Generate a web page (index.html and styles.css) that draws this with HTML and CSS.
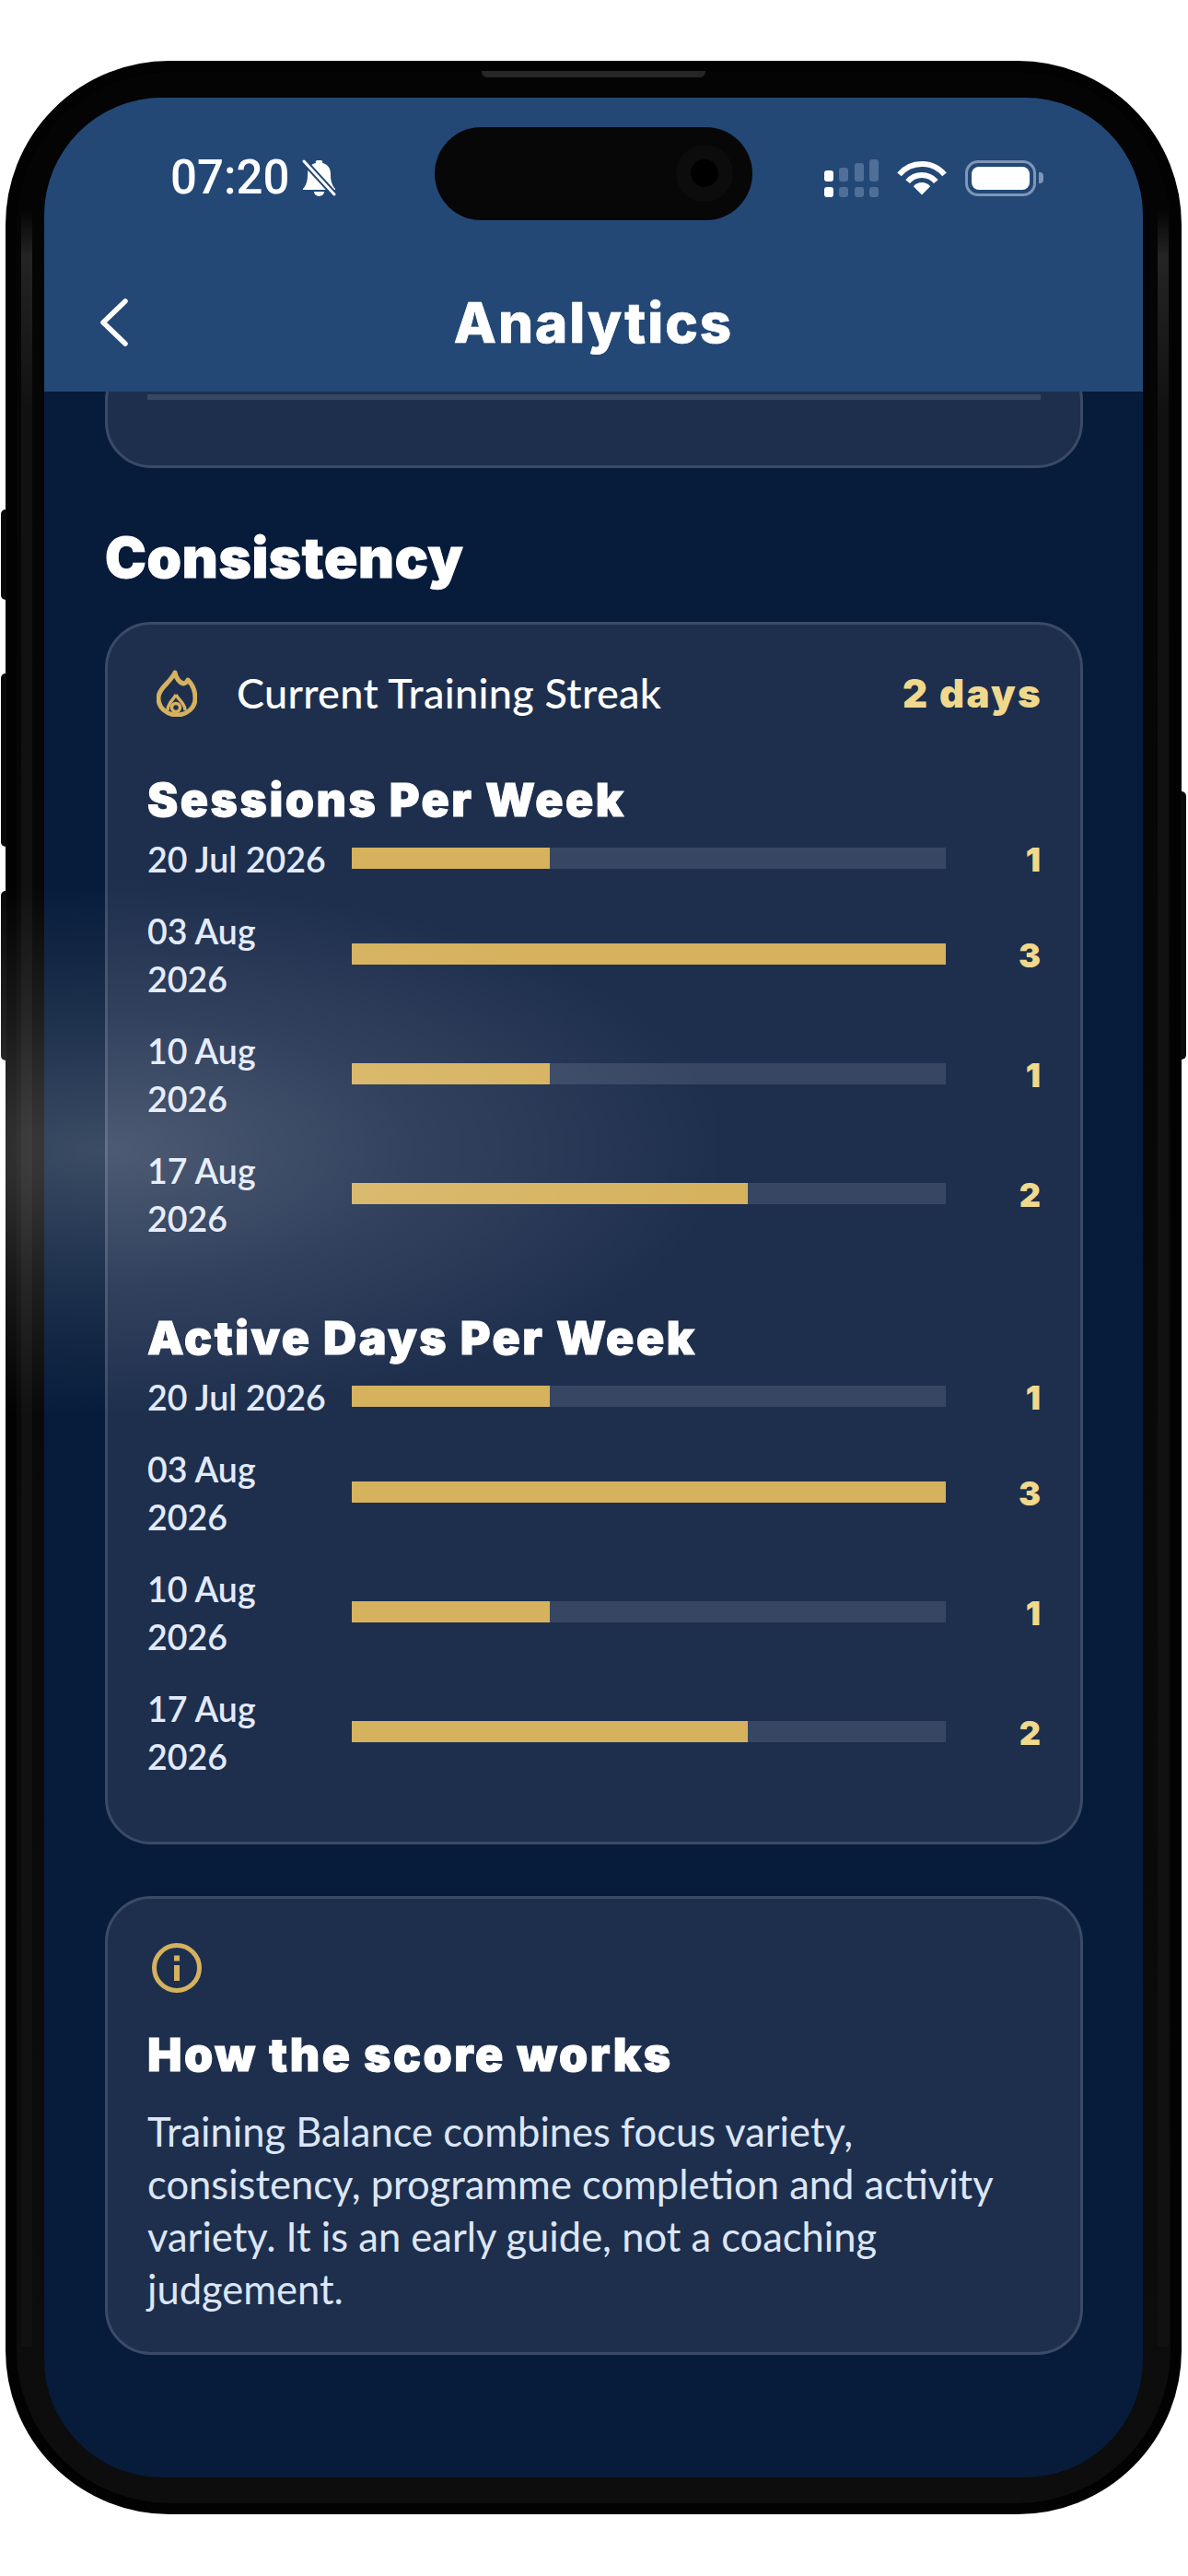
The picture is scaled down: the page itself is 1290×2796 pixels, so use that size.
FILE: index.html
```html
<!DOCTYPE html>
<html lang="en">
  <head>
    <meta charset="UTF-8" />
    <meta name="viewport" content="width=device-width, initial-scale=1.0" />
    <title>Analytics</title>
    <link rel="stylesheet" href="styles.css">
  </head>
  <body>
    <div class="phone">
      <span class="side-btn mute"></span>
      <span class="side-btn vol-up"></span>
      <span class="side-btn vol-down"></span>
      <span class="side-btn power"></span>
      <span class="speaker"></span>
      <span class="edge edge-left"></span>
      <span class="edge edge-right"></span>

      <div class="screen">
        <div class="island"><span class="camera"></span></div>

        <header class="top">
          <div class="status">
            <div class="status-left">
              <span class="time">07:20</span>
              <svg class="bell" viewBox="0 0 37 40">
                <path fill="#fff" d="M17 1h3a2 2 0 0 1 2 3c6 1 9 6 9 12 0 7 1 11 5 16v1H1v-1c4-5 5-9 5-16 0-6 3-11 9-12a2 2 0 0 1 2-3z" />
                <path fill="#fff" d="M13 35h11a5.500 5 0 0 1-11 0z" />
                <path stroke="#234876" stroke-width="7" d="M1 1l35 38" />
                <path stroke="#fff" stroke-width="3" stroke-linecap="round" d="M2 2l33 36" />
              </svg>
            </div>
            <div class="status-right">
              <div class="signal">
                <div class="sig-col on"><i class="s1"></i><i></i></div>
                <div class="sig-col"><i class="s2"></i><i></i></div>
                <div class="sig-col"><i class="s3"></i><i></i></div>
                <div class="sig-col"><i class="s4"></i><i></i></div>
              </div>
              <svg class="wifi" viewBox="0 0 54 38" fill="none" stroke="#fff" stroke-width="6">
                <path d="M2.500 15.400A32 32 0 0 1 51.500 15.400" />
                <path d="M11.700 23.100A20 20 0 0 1 42.300 23.100" />
                <path fill="#fff" stroke="none" d="M27 37.500L17.800 28.300A12 12 0 0 1 36.200 28.300z" />
              </svg>
              <div class="battery"><span class="battery-fill"></span></div>
            </div>
          </div>
          <div class="nav">
            <svg class="back" viewBox="0 0 32 52" fill="none" stroke="#fff" stroke-width="5.500" stroke-linecap="round" stroke-linejoin="round">
              <path d="M28 3L4 26l24 23" />
            </svg>
            <h1>Analytics</h1>
          </div>
        </header>

        <main class="scroll">
          <section class="card card-cut">
            <div class="track wide"></div>
          </section>

          <h2>Consistency</h2>

          <section class="card card-main">
            <div class="streak">
              <svg class="flame" viewBox="0 0 44 51" fill="none" stroke="#d6b25e" stroke-width="5" stroke-linejoin="round">
                <path d="M20 3C21 9 25 14 29 15C31 15 33 13 34 11C39 16 42 23 42 31C42 41 33 49 22 49C11 49 2 41 2 31C2 20 14 15 20 3Z" />
                <path d="M21 27C18 33 12 36 12 44M21 27C24 33 31 36 31 44" stroke-width="3.500" />
                <circle cx="21" cy="41" r="4.500" stroke-width="3.500" />
              </svg>
              <span class="streak-label">Current Training Streak</span>
              <span class="streak-value">2 days</span>
            </div>

            <h3 class="chart-title">Sessions Per Week</h3>
            <div class="rows">
              <div class="row">
                <span class="date">20 Jul 2026</span>
                <div class="track"><div class="fill" style="width: 33.33%"></div></div>
                <span class="count">1</span>
              </div>
              <div class="row">
                <span class="date">03 Aug 2026</span>
                <div class="track"><div class="fill" style="width: 100%"></div></div>
                <span class="count">3</span>
              </div>
              <div class="row">
                <span class="date">10 Aug 2026</span>
                <div class="track"><div class="fill" style="width: 33.33%"></div></div>
                <span class="count">1</span>
              </div>
              <div class="row">
                <span class="date">17 Aug 2026</span>
                <div class="track"><div class="fill" style="width: 66.67%"></div></div>
                <span class="count">2</span>
              </div>
            </div>

            <h3 class="chart-title second">Active Days Per Week</h3>
            <div class="rows">
              <div class="row">
                <span class="date">20 Jul 2026</span>
                <div class="track"><div class="fill" style="width: 33.33%"></div></div>
                <span class="count">1</span>
              </div>
              <div class="row">
                <span class="date">03 Aug 2026</span>
                <div class="track"><div class="fill" style="width: 100%"></div></div>
                <span class="count">3</span>
              </div>
              <div class="row">
                <span class="date">10 Aug 2026</span>
                <div class="track"><div class="fill" style="width: 33.33%"></div></div>
                <span class="count">1</span>
              </div>
              <div class="row">
                <span class="date">17 Aug 2026</span>
                <div class="track"><div class="fill" style="width: 66.67%"></div></div>
                <span class="count">2</span>
              </div>
            </div>
          </section>

          <section class="card card-info">
            <svg class="info" viewBox="0 0 54 54" fill="none" stroke="#d6b25e" stroke-width="5">
              <circle cx="27" cy="27" r="24.500" />
              <path stroke-width="6" d="M27 13.500v6M27 24v17" />
            </svg>
            <h3 class="chart-title">How the score works</h3>
            <p>Training Balance combines focus variety, consistency, programme completion and activity variety. It is an early guide, not a coaching judgement.</p>
          </section>
        </main>
      </div>

      <span class="glare"></span>
    </div>
  </body>
</html>
```

FILE: styles.css
```css
/* General Reset */
* {
  margin: 0;
  padding: 0;
  box-sizing: border-box;
}

body {
  background-color: #fff;
  height: 2796px;
  padding: 66px 7px 0 6px;
  overflow: hidden;
  font-family: "Lato", "Liberation Sans", sans-serif;
}

/* Phone frame */
.phone {
  position: relative;
  height: 2663px;
  padding: 28px 30px;
  border: 12px solid #020202;
  border-radius: 178px;
  background: linear-gradient(#040404, #0d0d0d);
}

.side-btn {
  position: absolute;
  width: 6px;
  background-color: #0a0a0a;
}

.mute { left: -17px; top: 475px; height: 98px; border-radius: 5px 0 0 5px; }
.vol-up { left: -17px; top: 653px; height: 188px; border-radius: 5px 0 0 5px; }
.vol-down { left: -17px; top: 889px; height: 184px; border-radius: 5px 0 0 5px; }
.power { right: -17px; top: 781px; height: 291px; border-radius: 0 5px 5px 0; }

.speaker {
  position: absolute;
  left: 505px;
  top: -1px;
  width: 243px;
  height: 7px;
  border-radius: 0 0 6px 6px;
  background-color: #262626;
}

.edge {
  position: absolute;
  top: 150px;
  bottom: 170px;
  width: 12px;
  background: linear-gradient(transparent, #242424 50px, #111 220px);
}

.edge-left { left: 5px; }
.edge-right { right: 2px; }

/* Screen */
.screen {
  position: relative;
  height: 2583px;
  border-radius: 128px;
  overflow: hidden;
  background-color: #071c3b;
}

.island {
  position: absolute;
  left: 424px;
  top: 32px;
  width: 345px;
  height: 101px;
  border-radius: 51px;
  background-color: #070707;
}

.camera {
  position: absolute;
  left: 262px;
  top: 19px;
  width: 62px;
  height: 62px;
  border-radius: 50%;
  border: 16px solid #0c0c0c;
  background-color: #000;
}

.glare {
  position: absolute;
  left: -18px;
  top: 880px;
  width: 780px;
  height: 580px;
  background: radial-gradient(ellipse 680px 290px at 110px 50%, rgba(255, 255, 255, 0.21), rgba(255, 255, 255, 0.09) 50%, rgba(255, 255, 255, 0) 100%);
  pointer-events: none;
}

/* Header */
.top {
  height: 319px;
  padding-top: 66px;
  background-color: #234876;
  color: #fff;
}

.status {
  display: flex;
  justify-content: space-between;
  align-items: center;
  height: 42px;
  padding: 0 116px 0 137px;
}

.status-left {
  display: flex;
  align-items: center;
  gap: 14px;
}

.time {
  font-family: "Roboto", sans-serif;
  font-size: 51px;
  font-weight: 500;
  line-height: 42px;
}

.bell {
  width: 37px;
  height: 40px;
}

.status-right {
  display: flex;
  align-items: center;
  gap: 20px;
}

.signal {
  display: flex;
  gap: 6.500px;
}

.sig-col {
  display: flex;
  flex-direction: column;
  justify-content: flex-end;
  gap: 6px;
  width: 10px;
  height: 41px;
}

.sig-col i {
  display: block;
  height: 11px;
  border-radius: 3px;
  background-color: #4f6f99;
}

.sig-col.on i { background-color: #fff; }
.sig-col .s1 { height: 12px; }
.sig-col .s2 { height: 15px; }
.sig-col .s3 { height: 20px; }
.sig-col .s4 { height: 24px; }

.wifi {
  width: 54px;
  height: 38px;
}

.battery {
  position: relative;
  width: 77px;
  height: 39px;
  padding: 4px;
  border: 3px solid #7f96b5;
  border-radius: 14px;
}

.battery::after {
  content: "";
  position: absolute;
  right: -11px;
  top: 10px;
  width: 5px;
  height: 12px;
  border-radius: 0 4px 4px 0;
  background-color: #7f96b5;
}

.battery-fill {
  display: block;
  height: 100%;
  border-radius: 8px;
  background-color: #fff;
}

.nav {
  display: grid;
  grid-template-columns: 1fr auto 1fr;
  align-items: center;
  height: 60px;
  margin-top: 106px;
  padding-left: 60px;
  padding-right: 60px;
}

.back {
  width: 32px;
  height: 52px;
}

h1 {
  font-family: "Inter", sans-serif;
  font-size: 60px;
  font-weight: 800;
  line-height: 60px;
  letter-spacing: 2px;
  -webkit-text-stroke: 0.7px #fff;
}

/* Scroll area */
.scroll {
  height: 2264px;
  padding: 0 65px 0 66px;
  overflow: hidden;
}

.card {
  border: 3px solid #3b4a66;
  border-radius: 50px;
  background-color: #1e2f4e;
}

.card-cut {
  height: 123px;
  margin-top: -40px;
  padding: 40px 43px 0;
}

.track {
  flex: 1;
  height: 23px;
  background-color: #374662;
}

.track.wide {
  height: 6px;
}

.fill {
  height: 100%;
  background-color: #d6b25e;
}

h2 {
  margin: 62px 0 35px;
  font-family: "Inter", sans-serif;
  font-size: 60px;
  font-weight: 900;
  line-height: 70px;
  letter-spacing: 0.7px;
  color: #fff;
  -webkit-text-stroke: 1px #fff;
}

.card-main {
  height: 1327px;
  padding: 44px 43px 0;
}

.streak {
  display: flex;
  align-items: center;
  height: 60px;
}

.flame {
  width: 44px;
  height: 51px;
  margin-left: 10px;
  margin-right: 43px;
}

.streak-label {
  flex: 1;
  font-size: 45px;
  font-weight: 500;
  letter-spacing: 0.3px;
  color: #fff;
}

.streak-value,
.count {
  font-family: "Inter", sans-serif;
  font-weight: 900;
  color: #f0d98c;
}

.streak-value {
  margin-right: -2px;
  font-size: 42px;
  letter-spacing: 2.300px;
}

.chart-title {
  margin-top: 56px;
  font-family: "Inter", sans-serif;
  font-size: 50px;
  font-weight: 900;
  line-height: 60px;
  letter-spacing: 2.500px;
  color: #fff;
  -webkit-text-stroke: 1px #fff;
}

.chart-title.second {
  margin-top: 75px;
}

.rows {
  display: flex;
  flex-direction: column;
  gap: 26px;
  margin-top: 7px;
}

.row {
  display: flex;
  align-items: center;
}

.date {
  width: 222px;
  margin-bottom: -2px;
  padding-right: 24px;
  padding-top: 2px;
  font-size: 37.500px;
  font-weight: 600;
  line-height: 52px;
  color: #e2eafa;
}

.count {
  width: 103px;
  padding-top: 3px;
  font-size: 36px;
  text-align: right;
}

.card-info {
  height: 498px;
  margin-top: 56px;
  padding: 48px 43px 0;
}

.info {
  display: block;
  width: 54px;
  height: 54px;
  margin-left: 5px;
}

.card-info .chart-title {
  margin-top: 37px;
}

.card-info p {
  margin-top: 25px;
  font-size: 43.500px;
  line-height: 57px;
  color: #dce6f5;
}
```
